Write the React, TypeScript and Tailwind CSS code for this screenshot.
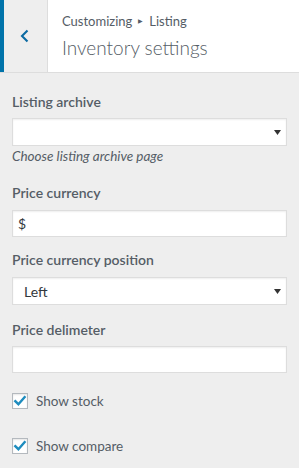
import React from "react";

function Caret() {
  return (
    <svg width="7" height="5" viewBox="0 0 7 5" className="absolute right-[5px] top-[11px]">
      <polygon points="0,0 7,0 3.5,5" fill="#333" />
    </svg>
  );
}

function Checkbox({ label, className }: { label: string; className?: string }) {
  return (
    <div className={"flex items-center " + (className ?? "")}>
      <div className="relative w-[16px] h-[16px] border border-[#b4b9be] bg-white shadow-[inset_0_1px_2px_rgba(0,0,0,0.1)]">
        <svg width="14" height="14" viewBox="0 0 14 14" className="absolute left-[0px] top-[0px]">
          <path d="M2.3 7.2 L5.4 10.2 L11.6 3.2" stroke="#1e8cbe" strokeWidth="2.4" fill="none" strokeLinecap="square" />
        </svg>
      </div>
      <span className="ml-[8px] text-[13.5px] leading-[20px] text-[#555d66]">{label}</span>
    </div>
  );
}

export default function App() {
  return (
    <div
      className="w-[299px] h-[468px] bg-[#eeeeee] overflow-hidden"
      style={{ fontFamily: "Lato, 'Liberation Sans', sans-serif" }}
    >
      <div className="flex h-[73px] bg-white border-b border-[#dddddd]">
        <div className="w-[48px] h-full box-border border-l-4 border-[#0073aa] border-r border-r-[#dddddd] bg-[#eeeeee] flex items-center justify-center">
          <svg width="9" height="14" viewBox="0 0 9 14" className="ml-[-2px]">
            <polyline points="7.5,1.5 2,7 7.5,12.5" stroke="#0b6aa2" strokeWidth="2.1" fill="none" />
          </svg>
        </div>
        <div className="pl-[14px] pt-[12px]">
          <div className="text-[13px] leading-[18px] text-[#555d66] flex items-center">
            <span>Customizing</span>
            <span className="mx-[6px] text-[6px]">▶</span>
            <span>Listing</span>
          </div>
          <div className="mt-[5px] text-[19px] leading-[26px] font-light text-[#555d66]">Inventory settings</div>
        </div>
      </div>

      <div className="px-3 pt-[19px] flex flex-col">
        <div className="text-[14px] leading-[20px] font-semibold text-[#555d66]">Listing archive</div>
        <div className="relative mt-[6px] h-[28px] bg-white border border-[#dddddd] shadow-[inset_0_1px_2px_rgba(0,0,0,0.07)]">
          <Caret />
        </div>
        <div className="mt-[1px] text-[13.5px] leading-[18px] italic text-[#555d66]">Choose listing archive page</div>

        <div className="mt-[18px] text-[14px] leading-[20px] font-semibold text-[#555d66]">Price currency</div>
        <div className="mt-[7px] h-[27px] bg-white border border-[#dddddd] shadow-[inset_0_1px_2px_rgba(0,0,0,0.07)] flex items-center pl-[5px] text-[14px] text-[#32373c]">
          $
        </div>

        <div className="mt-[13px] text-[14px] leading-[20px] font-semibold text-[#555d66]">Price currency position</div>
        <div className="relative mt-[7px] h-[28px] bg-white border border-[#dddddd] shadow-[inset_0_1px_2px_rgba(0,0,0,0.07)] flex items-center pl-[11px] text-[14px] text-[#32373c]">
          Left
          <Caret />
        </div>

        <div className="mt-[15px] text-[14px] leading-[20px] font-semibold text-[#555d66]">Price delimeter</div>
        <div className="mt-[6px] h-[27px] bg-white border border-[#dddddd] shadow-[inset_0_1px_2px_rgba(0,0,0,0.07)]" />

        <Checkbox label="Show stock" className="mt-[18px]" />
        <Checkbox label="Show compare" className="mt-[25px]" />
      </div>
    </div>
  );
}
